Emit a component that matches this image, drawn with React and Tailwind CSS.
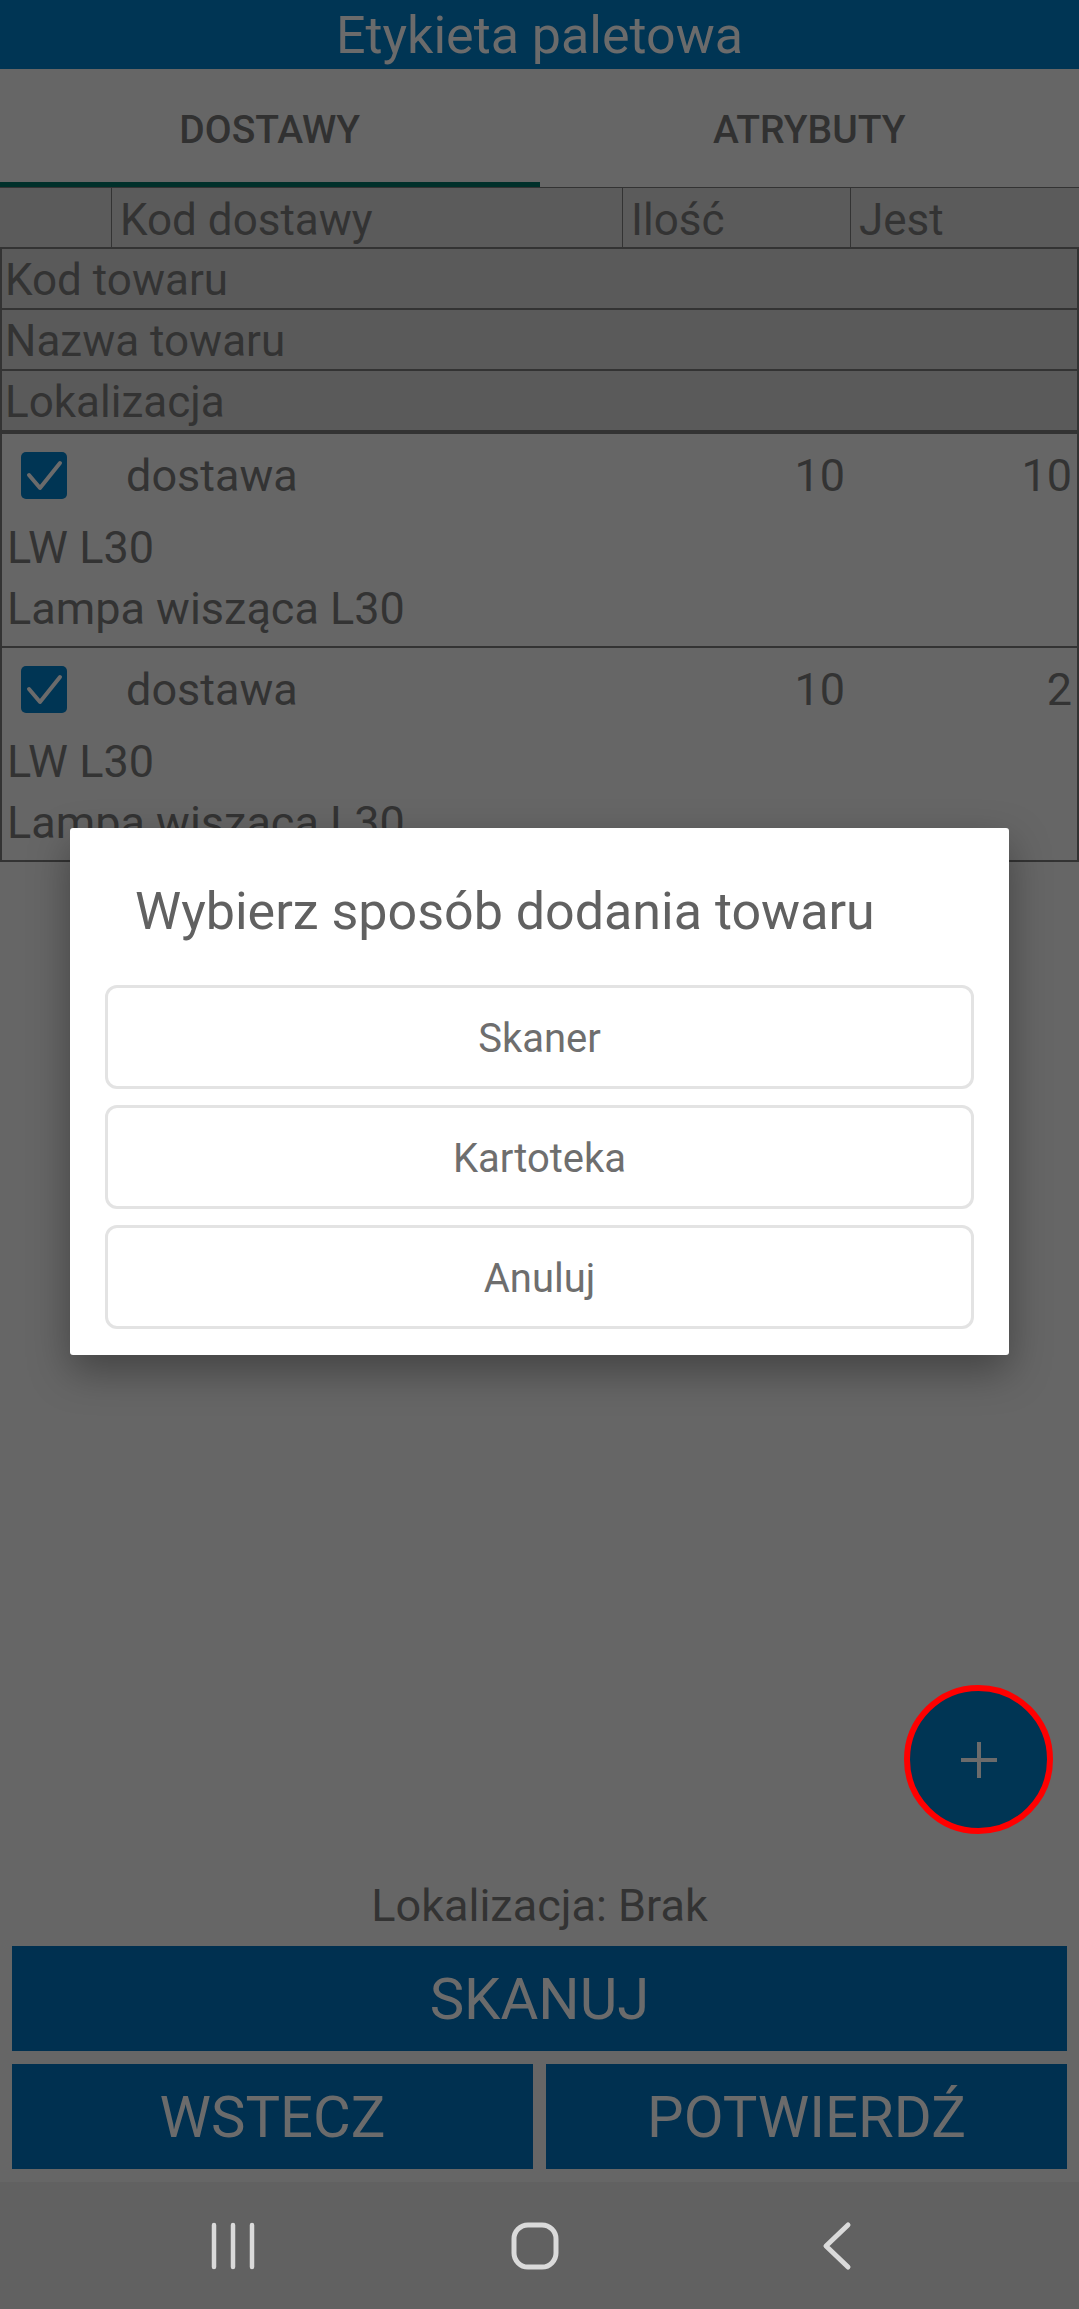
import React from 'react';

const Check = () => (
  <div className="w-[46px] h-[47px] rounded-[5px] bg-[#003554] flex items-center justify-center">
    <svg width="46" height="47" viewBox="0 0 46 47" fill="none">
      <path d="M8 23 L19 36 L39 11" stroke="#6b6b6b" strokeWidth="4" strokeLinecap="round" strokeLinejoin="round" />
    </svg>
  </div>
);

const ItemRow = ({ qty, have }) => (
  <div className="border-t-2 border-x-2 border-[#333] h-[214px] text-[45px] text-[#333] leading-none">
    <div className="h-[82px] flex items-center">
      <div className="w-[124px] pl-[19px]"><Check /></div>
      <div className="flex-1">dostawa</div>
      <div className="w-[228px] text-right pr-[6px]">{qty}</div>
      <div className="w-[226px] text-right pr-[5px]">{have}</div>
    </div>
    <div className="h-[62px] flex items-center pl-[5px]">LW L30</div>
    <div className="h-[60px] flex items-center pl-[5px]">Lampa wisząca L30</div>
  </div>
);

const InfoRow = ({ label }) => (
  <div className="h-[61px] border-b-2 border-x-2 border-[#333] bg-[#5a5a5a] flex items-center pl-[3px] pt-[3px] text-[44px] text-[#333] leading-none">
    {label}
  </div>
);

const DialogButton = ({ label }) => (
  <div className="h-[104px] rounded-[12px] border-[3px] border-[#e3e3e3] flex items-center justify-center pt-[4px] text-[40px] text-[#6e6e6e]">
    {label}
  </div>
);

const BigButton = ({ label, className = '' }) => (
  <div className={`h-[105px] bg-[#003050] flex items-center justify-center text-[58px] text-[#6b6b6b] leading-none ${className}`}>
    {label}
  </div>
);

export default function App() {
  return (
    <div className="relative w-[1079px] h-[2309px] overflow-hidden bg-[#666] font-['Roboto','Noto_Sans',sans-serif] flex flex-col">
      {/* title bar */}
      <div className="h-[69px] bg-[#003554] flex items-center justify-center pt-[2px] text-[52px] text-[#6b6b6b] leading-none">
        Etykieta paletowa
      </div>

      {/* tabs */}
      <div className="h-[118px] flex">
        <div className="flex-1 flex flex-col">
          <div className="flex-1 flex items-center justify-center pt-[10px] text-[39px] font-medium text-[#313131]">DOSTAWY</div>
          <div className="h-[5px] bg-[#00302a]" />
        </div>
        <div className="flex-1 flex items-center justify-center pt-[5px] text-[39px] font-medium text-[#313131]">ATRYBUTY</div>
      </div>

      {/* table */}
      <div className="border-t border-[#333]">
        <div className="h-[61px] border-b-2 border-[#333] bg-[#5b5b5b] flex text-[44px] text-[#333] leading-none">
          <div className="w-[112px] border-r border-[#333]" />
          <div className="w-[511px] border-r border-[#333] flex items-center pl-[8px] pt-[4px]">Kod dostawy</div>
          <div className="w-[228px] border-r border-[#333] flex items-center pl-[8px] pt-[4px]">Ilość</div>
          <div className="flex-1 flex items-center pl-[8px] pt-[4px]">Jest</div>
        </div>
        <InfoRow label="Kod towaru" />
        <InfoRow label="Nazwa towaru" />
        <InfoRow label="Lokalizacja" />
        <ItemRow qty="10" have="10" />
        <ItemRow qty="10" have="2" />
        <div className="border-t-2 border-[#333]" />
      </div>

      {/* free area with FAB */}
      <div className="flex-1 flex items-end justify-end">
        <div className="mr-[26px] mb-[40px] w-[149px] h-[149px] rounded-full border-[6px] border-[#ff0000] bg-[#003554] flex items-center justify-center">
          <svg width="40" height="40" viewBox="0 0 40 40">
            <path d="M20 2 V38 M2 20 H38" stroke="#6b6b6b" strokeWidth="4" />
          </svg>
        </div>
      </div>

      {/* bottom */}
      <div className="h-[60px] flex items-center justify-center pt-[2px] text-[45px] text-[#333] leading-none">
        Lokalizacja: Brak
      </div>
      <div className="px-[12px] pt-[12px] pb-[13px] flex flex-col gap-[13px]">
        <BigButton label="SKANUJ" />
        <div className="flex gap-[13px]">
          <BigButton label="WSTECZ" className="flex-1 h-[104px]" />
          <BigButton label="POTWIERDŹ" className="flex-1 h-[104px]" />
        </div>
      </div>

      {/* system navigation */}
      <div className="h-[127px] bg-[#616161] flex items-center justify-center gap-[252px] pr-[9px]">
        <svg width="50" height="50" viewBox="0 0 50 50" fill="none" stroke="#dadada" strokeWidth="4.5" strokeLinecap="round">
          <path d="M6 4 V46 M25 4 V46 M44 4 V46" />
        </svg>
        <svg width="50" height="50" viewBox="0 0 50 50" fill="none" stroke="#dadada" strokeWidth="5">
          <rect x="4" y="4" width="42" height="42" rx="14" />
        </svg>
        <svg width="50" height="50" viewBox="0 0 50 50" fill="none" stroke="#dadada" strokeWidth="5" strokeLinecap="round" strokeLinejoin="round">
          <path d="M36 4 L14 25 L36 46" />
        </svg>
      </div>

      {/* dialog */}
      <div className="absolute inset-0 flex justify-center items-start pt-[828px]">
        <div className="w-[939px] bg-white rounded-[3px] shadow-[0_16px_40px_rgba(0,0,0,0.35)] px-[35px] pt-[58px] pb-[26px]">
          <div className="pl-[30px] text-[52px] leading-none text-[#616161]">Wybierz sposób dodania towaru</div>
          <div className="mt-[47px] flex flex-col gap-[16px]">
            <DialogButton label="Skaner" />
            <DialogButton label="Kartoteka" />
            <DialogButton label="Anuluj" />
          </div>
        </div>
      </div>
    </div>
  );
}
